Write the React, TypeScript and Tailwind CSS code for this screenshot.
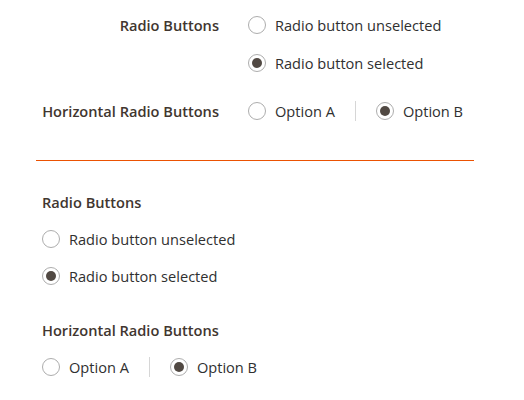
import React from 'react';

const font = { fontFamily: '"Open Sans", "Liberation Sans", sans-serif' };

function Radio({ label, checked }: { label: string; checked?: boolean }) {
    return (
        <label className="flex items-center h-[18px] cursor-pointer">
            <span className="w-[18px] h-[18px] rounded-full border border-[#adadad] bg-white flex items-center justify-center shrink-0">
                {checked && <span className="w-[10px] h-[10px] rounded-full bg-[#514943]"></span>}
            </span>
            <span className="ml-[9px] text-[14.6px] leading-[18px] text-[#303030]">{label}</span>
        </label>
    );
}

function HorizontalGroup() {
    return (
        <div className="flex items-center h-[20px]">
            <Radio label="Option A" />
            <span className="mx-[20px] w-px h-[20px] bg-[#d6d6d6]"></span>
            <Radio label="Option B" checked />
        </div>
    );
}

export default function App() {
    return (
        <div className="w-[524px] h-[400px] bg-white overflow-hidden" style={font}>
            {/* inline form layout */}
            <div className="pt-4">
                <div className="flex">
                    <div className="w-[219px] h-[18px] text-right text-[14.6px] leading-[18px] font-semibold text-[#41362f]">
                        Radio Buttons
                    </div>
                    <div className="ml-[29px] flex flex-col gap-[20px]">
                        <Radio label="Radio button unselected" />
                        <Radio label="Radio button selected" checked />
                    </div>
                </div>
                <div className="flex items-center mt-[29px] h-[20px]">
                    <div className="w-[219px] h-[18px] text-right text-[14.6px] leading-[18px] font-semibold text-[#41362f]">
                        Horizontal Radio Buttons
                    </div>
                    <div className="ml-[29px]">
                        <HorizontalGroup />
                    </div>
                </div>
            </div>

            <div className="mt-[39px] ml-[36px] w-[438px] h-[1px] bg-[#eb5202]"></div>

            {/* stacked form layout */}
            <div className="pl-[42px] pt-[32px]">
                <div className="h-[18px] text-[14.6px] leading-[18px] font-semibold text-[#41362f]">Radio Buttons</div>
                <div className="mt-[19px] flex flex-col gap-[19px]">
                    <Radio label="Radio button unselected" />
                    <Radio label="Radio button selected" checked />
                </div>
                <div className="mt-[36px] h-[18px] text-[14.6px] leading-[18px] font-semibold text-[#41362f]">
                    Horizontal Radio Buttons
                </div>
                <div className="mt-[18px]">
                    <HorizontalGroup />
                </div>
            </div>
        </div>
    );
}
